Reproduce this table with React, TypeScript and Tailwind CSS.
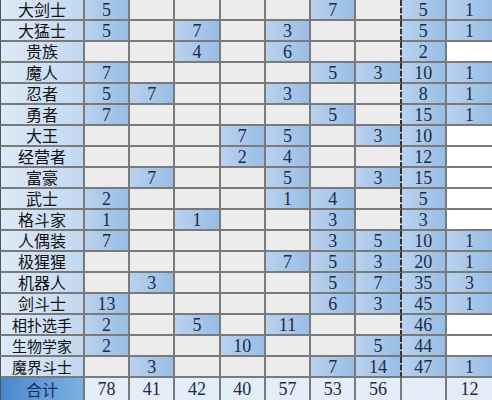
import React from "react";

type Row = { name: string; v: (number | null)[] };

const rows: Row[] = [
  { name: "大剑士", v: [5, null, null, null, null, 7, null, 5, 1] },
  { name: "大猛士", v: [5, null, 7, null, 3, null, null, 5, 1] },
  { name: "贵族", v: [null, null, 4, null, 6, null, null, 2, null] },
  { name: "魔人", v: [7, null, null, null, null, 5, 3, 10, 1] },
  { name: "忍者", v: [5, 7, null, null, 3, null, null, 8, 1] },
  { name: "勇者", v: [7, null, null, null, null, 5, null, 15, 1] },
  { name: "大王", v: [null, null, null, 7, 5, null, 3, 10, null] },
  { name: "经营者", v: [null, null, null, 2, 4, null, null, 12, null] },
  { name: "富豪", v: [null, 7, null, null, 5, null, 3, 15, null] },
  { name: "武士", v: [2, null, null, null, 1, 4, null, 5, null] },
  { name: "格斗家", v: [1, null, 1, null, null, 3, null, 3, null] },
  { name: "人偶装", v: [7, null, null, null, null, 3, 5, 10, 1] },
  { name: "极猩猩", v: [null, null, null, null, 7, 5, 3, 20, 1] },
  { name: "机器人", v: [null, 3, null, null, null, 5, 7, 35, 3] },
  { name: "剑斗士", v: [13, null, null, null, null, 6, 3, 45, 1] },
  { name: "相扑选手", v: [2, null, 5, null, 11, null, null, 46, null] },
  { name: "生物学家", v: [2, null, null, 10, null, null, 5, 44, null] },
  { name: "魔界斗士", v: [null, 3, null, null, null, 7, 14, 47, 1] },
];

const totals: (number | null)[] = [78, 41, 42, 40, 57, 53, 56, null, 12];

function Cell({ val, col }: { val: number | null; col: number }) {
  const filled = val !== null;
  let bg = "bg-[#ececec]";
  if (filled) bg = "bg-gradient-to-r from-[#b9d2ee] to-[#99bde5]";
  else if (col === 8) bg = "bg-white";
  const border =
    col === 6
      ? "border-r-2 border-r-[#333333] [border-right-style:dashed]"
      : col === 8
      ? ""
      : "border-r-2 border-r-[#7a7a7a]";
  return (
    <div
      className={`h-[21px] flex items-center justify-center border-b-2 border-b-[#7a7a7a] ${border} ${bg} font-['Liberation_Serif',serif] text-[18px] leading-[18px] text-[#1c2a4a]`}
    >
      {filled ? val : ""}
    </div>
  );
}

export default function App() {
  return (
    <div className="w-[492px] h-[400px] overflow-hidden bg-white">
      <div className="grid grid-cols-[85px_repeat(9,1fr)]">
        {rows.map((r, i) => (
          <React.Fragment key={i}>
            <div
              className={`h-[21px] flex items-center justify-center border-l border-l-[#555] border-r-2 border-r-[#7a7a7a] border-b-2 border-b-[#7a7a7a] bg-gradient-to-r from-[#dce9f7] to-[#c3d8f0] font-['Noto_Sans_CJK_SC',sans-serif] ${r.name.length > 3 ? "text-[15px] leading-[16px]" : "text-[16px] leading-[17px]"} text-[#111]`}
            >
              {r.name}
            </div>
            {r.v.map((val, j) => (
              <Cell key={j} val={val} col={j} />
            ))}
          </React.Fragment>
        ))}
        <div className="h-[22px] flex items-center justify-center border-l border-l-[#555] border-r-2 border-r-[#7a7a7a] bg-gradient-to-r from-[#4a88cc] to-[#7bb0e2] font-['Noto_Sans_CJK_SC',sans-serif] text-[16px] leading-[17px] text-[#1a2a55]">
          合计
        </div>
        {totals.map((t, j) => (
          <div
            key={j}
            className={`h-[22px] flex items-center justify-center bg-[#e3edf8] ${j === 8 ? "" : "border-r-2 border-r-[#7a7a7a]"} font-['Liberation_Serif',serif] text-[18px] leading-[18px] text-[#1c2a4a]`}
          >
            {t ?? ""}
          </div>
        ))}
      </div>
    </div>
  );
}
